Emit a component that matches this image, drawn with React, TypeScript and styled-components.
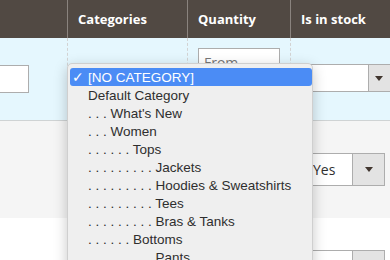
import React from 'react'
import styled, { createGlobalStyle } from 'styled-components'

const GlobalStyle = createGlobalStyle`
    html, body {
        margin: 0;
        padding: 0;
        background: #fff;
        overflow: hidden;
    }
    body {
        font-family: "Open Sans", "Liberation Sans", sans-serif;
        width: 390px;
        height: 260px;
    }
`

const categories = [
    { label: '[NO CATEGORY]', selected: true },
    { label: 'Default Category' },
    { label: ". . . What's New" },
    { label: '. . . Women' },
    { label: '. . . . . . Tops' },
    { label: '. . . . . . . . . Jackets' },
    { label: '. . . . . . . . . Hoodies & Sweatshirts' },
    { label: '. . . . . . . . . Tees' },
    { label: '. . . . . . . . . Bras & Tanks' },
    { label: '. . . . . . Bottoms' },
    { label: '. . . . . . . . . Pants' },
    { label: '. . . . . . . . . Shorts' },
]

const SelectBox: React.FC<{ value?: string, wide?: boolean }> = ({ value, wide }) => (
    <SSelect $wide={wide}>
        <SSelectValue>{value}</SSelectValue>
        <SArrowBtn $wide={wide}>
            <SArrow />
        </SArrowBtn>
    </SSelect>
)

const App: React.FC = () => {
    return (
        <SPage>
            <GlobalStyle />
            <SGrid>
                <SHeadRow>
                    <SHeadCell />
                    <SHeadCell>Categories</SHeadCell>
                    <SHeadCell>Quantity</SHeadCell>
                    <SHeadCell>Is in stock</SHeadCell>
                </SHeadRow>
                <SFilterRow>
                    <SCell><STextInput /></SCell>
                    <SCell />
                    <SCell>
                        <SRangeStack>
                            <SRangeInput placeholder="From" />
                            <SRangeInput placeholder="To" />
                        </SRangeStack>
                    </SCell>
                    <SCell><SelectBox wide /></SCell>
                </SFilterRow>
                <SDataRow $tone="#f5f5f5">
                    <SCell />
                    <SCell />
                    <SCell />
                    <SCell><SelectBox value="Yes" /></SCell>
                </SDataRow>
                <SDataRow $tone="#fff">
                    <SCell />
                    <SCell />
                    <SCell />
                    <SCell><SelectBox value="Yes" /></SCell>
                </SDataRow>
            </SGrid>

            <SDropdown>
                {categories.map(c => (
                    <SOption key={c.label} $selected={!!c.selected}>
                        <SCheck>{c.selected ? '✓' : ''}</SCheck>
                        {c.label}
                    </SOption>
                ))}
            </SDropdown>
        </SPage>
    )
}

export default App

const SPage = styled.div`
    position: relative;
    width: 390px;
    height: 260px;
    overflow: hidden;
`

const SGrid = styled.div`
    display: flex;
    flex-direction: column;
    width: 410px;
`

const SRow = styled.div`
    display: grid;
    grid-template-columns: 67px 120px 103px 120px;
`

const SHeadRow = styled(SRow)`
    height: 38px;
    background: #514943;
`

const SHeadCell = styled.div`
    display: flex;
    align-items: center;
    padding: 0 10px;
    color: #fff;
    font-weight: 700;
    font-size: 13px;
    & + & {
        border-left: 1px solid #8a837e;
    }
`

const SCell = styled.div`
    display: flex;
    align-items: center;
    padding: 0 10px;
    & + & {
        border-left: 1px dashed #d3d3d3;
    }
`

const SFilterRow = styled(SRow)`
    height: 82px;
    background: #e5f7fe;
    border-bottom: 1px solid #cfd3d4;
`

const SDataRow = styled(SRow)<{ $tone: string }>`
    height: 97px;
    background: ${p => p.$tone};
`

const STextInput = styled.div`
    height: 26px;
    width: 100%;
    margin-left: -30px;
    background: #fff;
    border: 1px solid #adadad;
`

const SRangeStack = styled.div`
    display: flex;
    flex-direction: column;
    gap: 6px;
    width: 100%;
`

const SRangeInput = styled.input`
    box-sizing: border-box;
    width: 100%;
    height: 28px;
    border: 1px solid #adadad;
    background: #fff;
    padding: 0 5px;
    font-family: "Open Sans", sans-serif;
    font-size: 14px;
    color: #303030;
    &::placeholder {
        color: #777;
    }
`

const SSelect = styled.div<{ $wide?: boolean }>`
    display: flex;
    box-sizing: border-box;
    flex-shrink: 0;
    width: ${p => p.$wide ? '100px' : '84px'};
    height: ${p => p.$wide ? '28px' : '33px'};
    margin-top: ${p => p.$wide ? '-2px' : '0'};
    background: #fff;
    border: 1px solid #adadad;
`

const SSelectValue = styled.div`
    flex: 1;
    display: flex;
    align-items: center;
    padding-left: 11px;
    font-size: 14px;
    color: #303030;
`

const SArrowBtn = styled.div<{ $wide?: boolean }>`
    width: 32px;
    display: flex;
    align-items: center;
    justify-content: ${p => p.$wide ? 'flex-start' : 'center'};
    padding-left: ${p => p.$wide ? '6px' : '0'};
    box-sizing: border-box;
    background: #e3e3e3;
    border-left: 1px solid #adadad;
`

const SArrow = styled.span`
    width: 0;
    height: 0;
    border-left: 4px solid transparent;
    border-right: 4px solid transparent;
    border-top: 5px solid #41362f;
`

const SDropdown = styled.div`
    position: absolute;
    left: 67px;
    top: 63px;
    width: 246px;
    padding: 4px 0;
    box-sizing: border-box;
    background: #efefef;
    border: 1px solid #cfcfcf;
    border-radius: 5px;
    box-shadow: 0 4px 14px rgba(0, 0, 0, 0.22);
`

const SOption = styled.div<{ $selected: boolean }>`
    display: flex;
    align-items: center;
    height: 18px;
    margin: 0 0 0 2px;
    padding-left: 2px;
    border-radius: 3px;
    font-family: "Liberation Sans", Arial, sans-serif;
    font-size: 13.5px;
    white-space: nowrap;
    color: ${p => p.$selected ? '#fff' : '#2e2e2e'};
    background: ${p => p.$selected ? '#4b8cf5' : 'transparent'};
`

const SCheck = styled.span`
    width: 16px;
    flex-shrink: 0;
    font-family: "DejaVu Sans", sans-serif;
    font-size: 14px;
`
